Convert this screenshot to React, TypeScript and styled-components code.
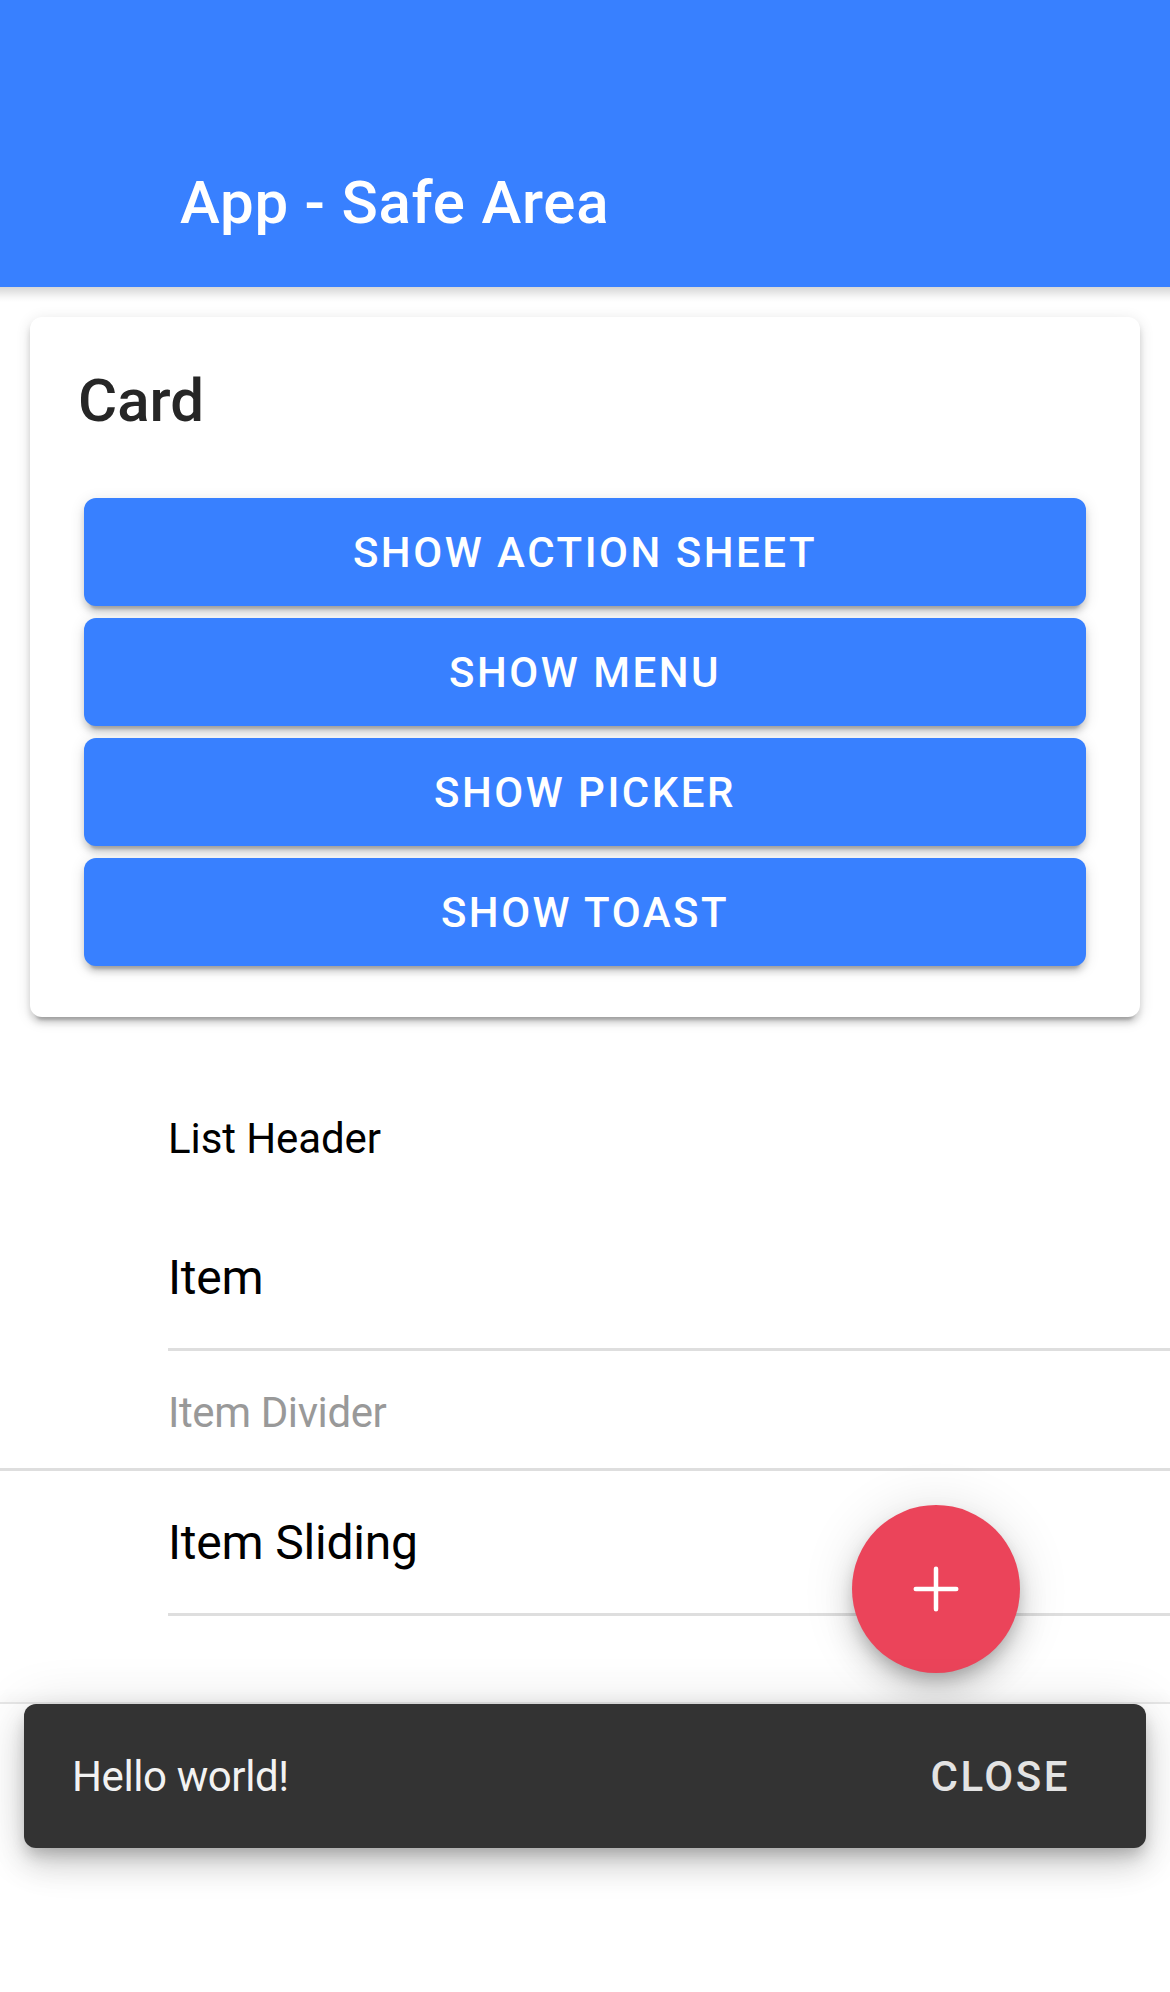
import React from "react";
import styled, { createGlobalStyle } from "styled-components";

const Global = createGlobalStyle`
  html, body {
    margin: 0;
    padding: 0;
    background: #ffffff;
  }
  body {
    font-family: Roboto, "Noto Sans", "Liberation Sans", sans-serif;
    -webkit-font-smoothing: antialiased;
  }
  * { box-sizing: border-box; }
`;

const Page = styled.div`
  width: 1170px;
  min-height: 1992px;
  display: flex;
  flex-direction: column;
  background: #ffffff;
`;

const Header = styled.header`
  position: relative;
  height: 287px;
  background: #3880ff;
  display: flex;
  flex-direction: column;
  justify-content: flex-end;
  z-index: 2;
  &::after {
    content: "";
    position: absolute;
    left: 0;
    right: 0;
    bottom: -15px;
    height: 15px;
    background: linear-gradient(to bottom, rgba(0, 0, 0, 0.16), rgba(0, 0, 0, 0.03) 70%, rgba(0, 0, 0, 0));
  }
`;

const Toolbar = styled.div`
  height: 168px;
  display: flex;
  align-items: center;
  padding-left: 180px;
`;

const Title = styled.h1`
  margin: 0;
  font-size: 60px;
  font-weight: 500;
  letter-spacing: 0.75px;
  color: #ffffff;
  line-height: 1;
`;

const Content = styled.main`
  position: relative;
  height: 1415px;
  display: flex;
  flex-direction: column;
`;

const Card = styled.section`
  margin: 30px 30px 30px;
  background: #ffffff;
  border-radius: 12px;
  box-shadow: 0 9px 3px -6px rgba(0, 0, 0, 0.2), 0 6px 6px 0 rgba(0, 0, 0, 0.14),
    0 3px 15px 0 rgba(0, 0, 0, 0.12);
`;

const CardHeader = styled.div`
  padding: 48px 48px 0;
`;

const CardTitle = styled.h2`
  margin: 0;
  font-size: 60px;
  line-height: 72px;
  font-weight: 500;
  color: #262626;
`;

const CardContent = styled.div`
  padding: 61px 54px 51px;
  display: flex;
  flex-direction: column;
  gap: 12px;
`;

const Button = styled.button`
  height: 108px;
  border: 0;
  border-radius: 12px;
  background: #3880ff;
  color: #ffffff;
  font-family: Roboto, "Liberation Sans", sans-serif;
  font-size: 42px;
  font-weight: 500;
  letter-spacing: 2.52px;
  text-transform: uppercase;
  display: flex;
  align-items: center;
  justify-content: center;
  box-shadow: 0 9px 3px -6px rgba(0, 0, 0, 0.2), 0 6px 6px 0 rgba(0, 0, 0, 0.14),
    0 3px 15px 0 rgba(0, 0, 0, 0.12);
`;

const List = styled.div`
  padding-top: 24px;
  display: flex;
  flex-direction: column;
`;

const ListHeader = styled.div`
  height: 135px;
  padding-left: 168px;
  display: flex;
  align-items: center;
  font-size: 42px;
  color: #000000;
  letter-spacing: -0.1px;
`;

const Item = styled.div`
  padding-left: 168px;
  display: flex;
`;

const ItemInner = styled.div`
  flex: 1;
  height: 145px;
  border-bottom: 3px solid #dedede;
  display: flex;
  align-items: center;
  font-size: 48px;
  color: #000000;
  padding-top: 1px;
  letter-spacing: -0.2px;
`;

const ItemDivider = styled.div`
  height: 120px;
  padding-left: 168px;
  padding-top: 6px;
  border-bottom: 3px solid #dedede;
  display: flex;
  align-items: center;
  font-size: 42px;
  color: #999999;
  letter-spacing: -0.4px;
`;

const Fab = styled.button`
  position: absolute;
  right: 150px;
  bottom: 29px;
  width: 168px;
  height: 168px;
  border-radius: 50%;
  border: 0;
  padding: 0;
  background: #eb445a;
  display: flex;
  align-items: center;
  justify-content: center;
  box-shadow: 0 9px 15px -3px rgba(0, 0, 0, 0.2), 0 18px 30px 0 rgba(0, 0, 0, 0.14),
    0 3px 54px 0 rgba(0, 0, 0, 0.12);
`;

const BottomArea = styled.div`
  position: relative;
  flex: 1;
  border-top: 2px solid #e6e6e6;
  box-shadow: 0 -6px 12px rgba(0, 0, 0, 0.03);
  background: #ffffff;
  padding: 0 24px;
`;

const Toast = styled.div`
  height: 144px;
  border-radius: 12px;
  background: #333333;
  display: flex;
  align-items: center;
  justify-content: space-between;
  padding-left: 48px;
  padding-right: 76px;
  box-shadow: 0 9px 15px -3px rgba(0, 0, 0, 0.2), 0 18px 30px 0 rgba(0, 0, 0, 0.14),
    0 3px 54px 0 rgba(0, 0, 0, 0.12);
`;

const ToastMessage = styled.span`
  font-size: 42px;
  color: #f2f2f2;
  letter-spacing: -0.4px;
`;

const ToastButton = styled.span`
  font-size: 42px;
  font-weight: 500;
  letter-spacing: 2.52px;
  color: #e3e3e3;
  text-transform: uppercase;
`;

const PlusIcon = () => (
  <svg width="72" height="72" viewBox="0 0 512 512" aria-hidden="true">
    <path
      d="M256 112v288M400 256H112"
      fill="none"
      stroke="#ffffff"
      strokeWidth="32"
      strokeLinecap="round"
      strokeLinejoin="round"
    />
  </svg>
);

const buttons = ["Show Action Sheet", "Show Menu", "Show Picker", "Show Toast"];

export default function App() {
  return (
    <Page>
      <Global />
      <Header>
        <Toolbar>
          <Title>App - Safe Area</Title>
        </Toolbar>
      </Header>
      <Content>
        <Card>
          <CardHeader>
            <CardTitle>Card</CardTitle>
          </CardHeader>
          <CardContent>
            {buttons.map((b) => (
              <Button key={b}>{b}</Button>
            ))}
          </CardContent>
        </Card>
        <List>
          <ListHeader>List Header</ListHeader>
          <Item>
            <ItemInner>Item</ItemInner>
          </Item>
          <ItemDivider>Item Divider</ItemDivider>
          <Item>
            <ItemInner>Item Sliding</ItemInner>
          </Item>
        </List>
        <Fab aria-label="add">
          <PlusIcon />
        </Fab>
      </Content>
      <BottomArea>
        <Toast>
          <ToastMessage>Hello world!</ToastMessage>
          <ToastButton>Close</ToastButton>
        </Toast>
      </BottomArea>
    </Page>
  );
}
